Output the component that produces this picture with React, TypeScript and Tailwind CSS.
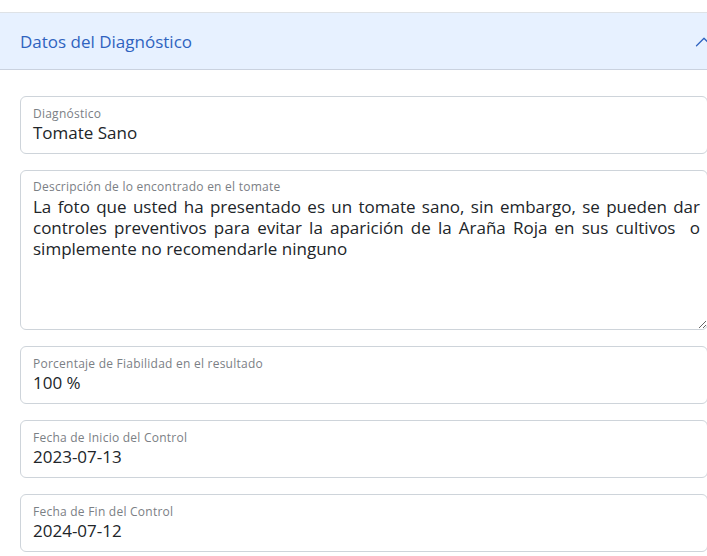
import React from 'react';

const font = { fontFamily: '"Open Sans", "Liberation Sans", sans-serif' };

const Field: React.FC<{ label: string; value: string }> = ({ label, value }) => (
  <div className="w-[688px] h-[58px] mb-4 border border-[#ced4da] rounded-md bg-white px-3 py-[9px] flex flex-col">
    <span className="text-[12px] leading-[15px] tracking-[0.02em] text-[#7b8085]">{label}</span>
    <span className="mt-px text-[17px] leading-[21px] text-[#212529]">{value}</span>
  </div>
);

const App: React.FC = () => {
  return (
    <div className="w-[707px] h-[556px] overflow-hidden bg-white" style={font}>
      <div className="w-[734px] pt-3">
        <div className="border-t border-[#dee2e6]">
          <button
            type="button"
            className="w-full h-[57px] flex items-center px-5 bg-[#e7f1ff] text-[#2f63c0] text-[17px] text-left shadow-[inset_0_-1px_0_rgba(0,0,0,0.125)]"
          >
            Datos del Diagnóstico
            <svg className="ml-auto w-5 h-5 rotate-180" viewBox="0 0 16 16" fill="#2f63c0">
              <path
                fillRule="evenodd"
                d="M1.646 4.646a.5.5 0 0 1 .708 0L8 10.293l5.646-5.647a.5.5 0 0 1 .708.708l-6 6a.5.5 0 0 1-.708 0l-6-6a.5.5 0 0 1 0-.708z"
              />
            </svg>
          </button>
        </div>

        <div className="px-5 pt-[26px]">
          <Field label="Diagnóstico" value="Tomate Sano" />

          <div className="w-[688px] h-[160px] mb-4 border border-[#ced4da] rounded-md bg-white pl-3 pr-[7px] pt-[9px] resize-y overflow-auto">
            <div className="text-[12px] leading-[14px] tracking-[0.02em] text-[#7b8085]">
              Descripción de lo encontrado en el tomate
            </div>
            <div className="mt-[2px] text-[17px] leading-[21px] text-[#212529]">
              <div className="text-justify [text-align-last:justify] whitespace-nowrap">
                La foto que usted ha presentado es un tomate sano, sin embargo, se pueden dar
              </div>
              <div className="text-justify [text-align-last:justify] whitespace-pre">
                controles preventivos para evitar la aparición de la Araña Roja en sus cultivos  o
              </div>
              <div>simplemente no recomendarle ninguno</div>
            </div>
          </div>

          <Field label="Porcentaje de Fiabilidad en el resultado" value="100 %" />
          <Field label="Fecha de Inicio del Control" value="2023-07-13" />
          <Field label="Fecha de Fin del Control" value="2024-07-12" />
        </div>
      </div>
    </div>
  );
};

export default App;
